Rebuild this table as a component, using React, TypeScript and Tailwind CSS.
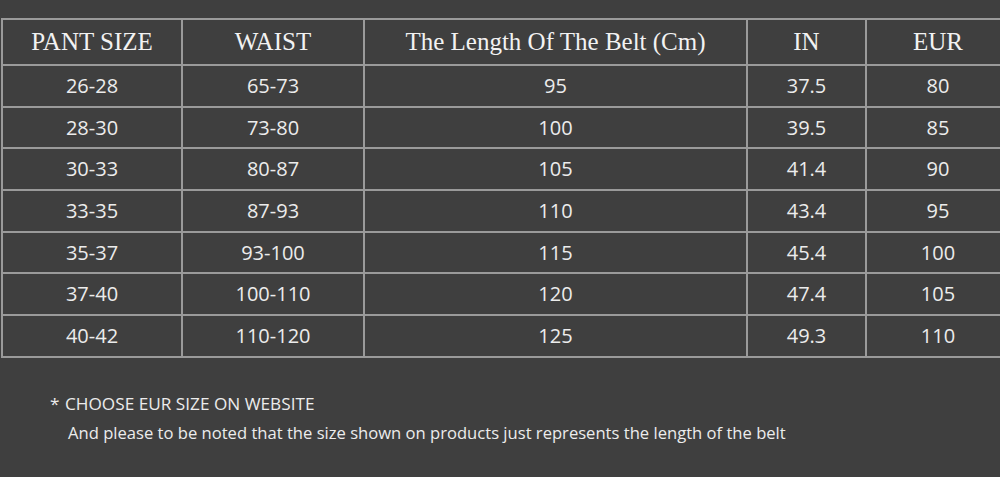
const headers = ["PANT SIZE", "WAIST", "The Length Of The Belt (Cm)", "IN", "EUR"];

const rows = [
  ["26-28", "65-73", "95", "37.5", "80"],
  ["28-30", "73-80", "100", "39.5", "85"],
  ["30-33", "80-87", "105", "41.4", "90"],
  ["33-35", "87-93", "110", "43.4", "95"],
  ["35-37", "93-100", "115", "45.4", "100"],
  ["37-40", "100-110", "120", "47.4", "105"],
  ["40-42", "110-120", "125", "49.3", "110"],
];

export default function App() {
  return (
    <div className="h-[477px] w-[1000px] overflow-hidden bg-[#3f3f3f] pt-[18px]">
      <div className="ml-[1px] grid w-[1010px] grid-cols-[178px_180px_381px_117px_1fr] gap-[2px] border-2 border-[#9a9a9a] bg-[#9a9a9a]">
        {headers.map((h) => (
          <div
            key={h}
            className="flex h-[44px] items-center justify-center bg-[#3f3f3f] text-[25px] text-[#f2f2f2]"
            style={{ fontFamily: '"Liberation Serif", "Times New Roman", serif' }}
          >
            {h}
          </div>
        ))}
        {rows.map((r) =>
          r.map((c, i) => (
            <div
              key={r[0] + i}
              className="flex h-[39.7px] items-center justify-center bg-[#3f3f3f] text-[20px] text-[#ececec]"
              style={{ fontFamily: '"Open Sans", sans-serif' }}
            >
              {c}
            </div>
          ))
        )}
      </div>
      <div
        className="mt-[31px] flex flex-col text-[#ececec]"
        style={{ fontFamily: '"Open Sans", sans-serif' }}
      >
        <div className="flex h-[30px] items-center pl-[50px] text-[17.2px]">
          <span className="w-[15px]">*</span>
          <span>CHOOSE EUR SIZE ON WEBSITE</span>
        </div>
        <div className="flex h-[30px] items-center pl-[68px] text-[16.6px]">
          And please to be noted that the size shown on products just represents the length of the belt
        </div>
      </div>
    </div>
  );
}
